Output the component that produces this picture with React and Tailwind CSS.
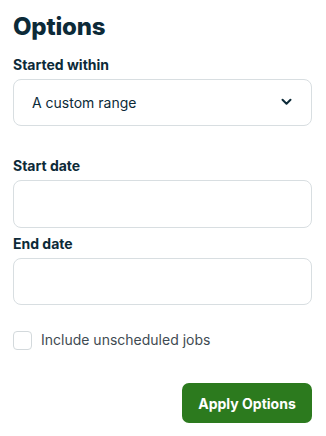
import React, { useState } from 'react';

export default function App() {
	const [range, setRange] = useState('custom');
	const [includeUnscheduled, setIncludeUnscheduled] = useState(false);

	return (
		<div
			className="w-[326px] h-[436px] bg-white pl-[13px] pr-[14px] pt-[11px] text-[#0c2a38]"
			style={{ fontFamily: 'Inter, "Noto Sans", sans-serif' }}>
			<h1 className="text-[24px] leading-[32px] font-extrabold tracking-[-0.2px]">
				Options
			</h1>

			{/* Started within */}
			<label className="block mt-[12px] mb-[4px] text-[14px] leading-[20px] font-bold">
				Started within
			</label>
			<div className="relative">
				<select
					value={range}
					onChange={(e) => setRange(e.target.value)}
					className="appearance-none w-full h-[47px] rounded-[8px] border border-[#d8dee1] bg-white pl-[18px] pr-10 text-[14px] text-[#0c2a38] focus:outline-none">
					<option value="custom">A custom range</option>
					<option value="day">The last day</option>
					<option value="week">The last week</option>
				</select>
				<svg
					className="pointer-events-none absolute right-[20px] top-[19px]"
					width="11"
					height="8"
					viewBox="0 0 11 8"
					fill="none">
					<path
						d="M1.5 1.8 L5.5 5.8 L9.5 1.8"
						stroke="#0c2a38"
						strokeWidth="2"
						strokeLinecap="round"
						strokeLinejoin="round"
					/>
				</svg>
			</div>

			{/* Start date */}
			<label className="block mt-[30px] mb-[4px] text-[14px] leading-[20px] font-bold">
				Start date
			</label>
			<input
				type="text"
				className="block w-full h-[48px] rounded-[8px] border border-[#d8dee1] bg-white px-[18px] text-[14px] focus:outline-none"
			/>

			{/* End date */}
			<label className="block mt-[6px] mb-[4px] text-[14px] leading-[20px] font-bold">
				End date
			</label>
			<input
				type="text"
				className="block w-full h-[47px] rounded-[8px] border border-[#d8dee1] bg-white px-[18px] text-[14px] focus:outline-none"
			/>

			{/* Unscheduled */}
			<label className="flex items-center mt-[25px] gap-[9px] cursor-pointer">
				<input
					type="checkbox"
					checked={includeUnscheduled}
					onChange={(e) => setIncludeUnscheduled(e.target.checked)}
					className="appearance-none w-[19px] h-[19px] rounded-[4px] border-[1.5px] border-[#d3d9dc] bg-white"
				/>
				<span className="text-[14px] leading-[20px] text-[#3f4b52]">
					Include unscheduled jobs
				</span>
			</label>

			<div className="flex justify-end mt-[33px]">
				<button className="w-[130px] h-[40px] rounded-[7px] bg-[#2c7a1e] text-white text-[14px] font-bold">
					Apply Options
				</button>
			</div>
		</div>
	);
}
